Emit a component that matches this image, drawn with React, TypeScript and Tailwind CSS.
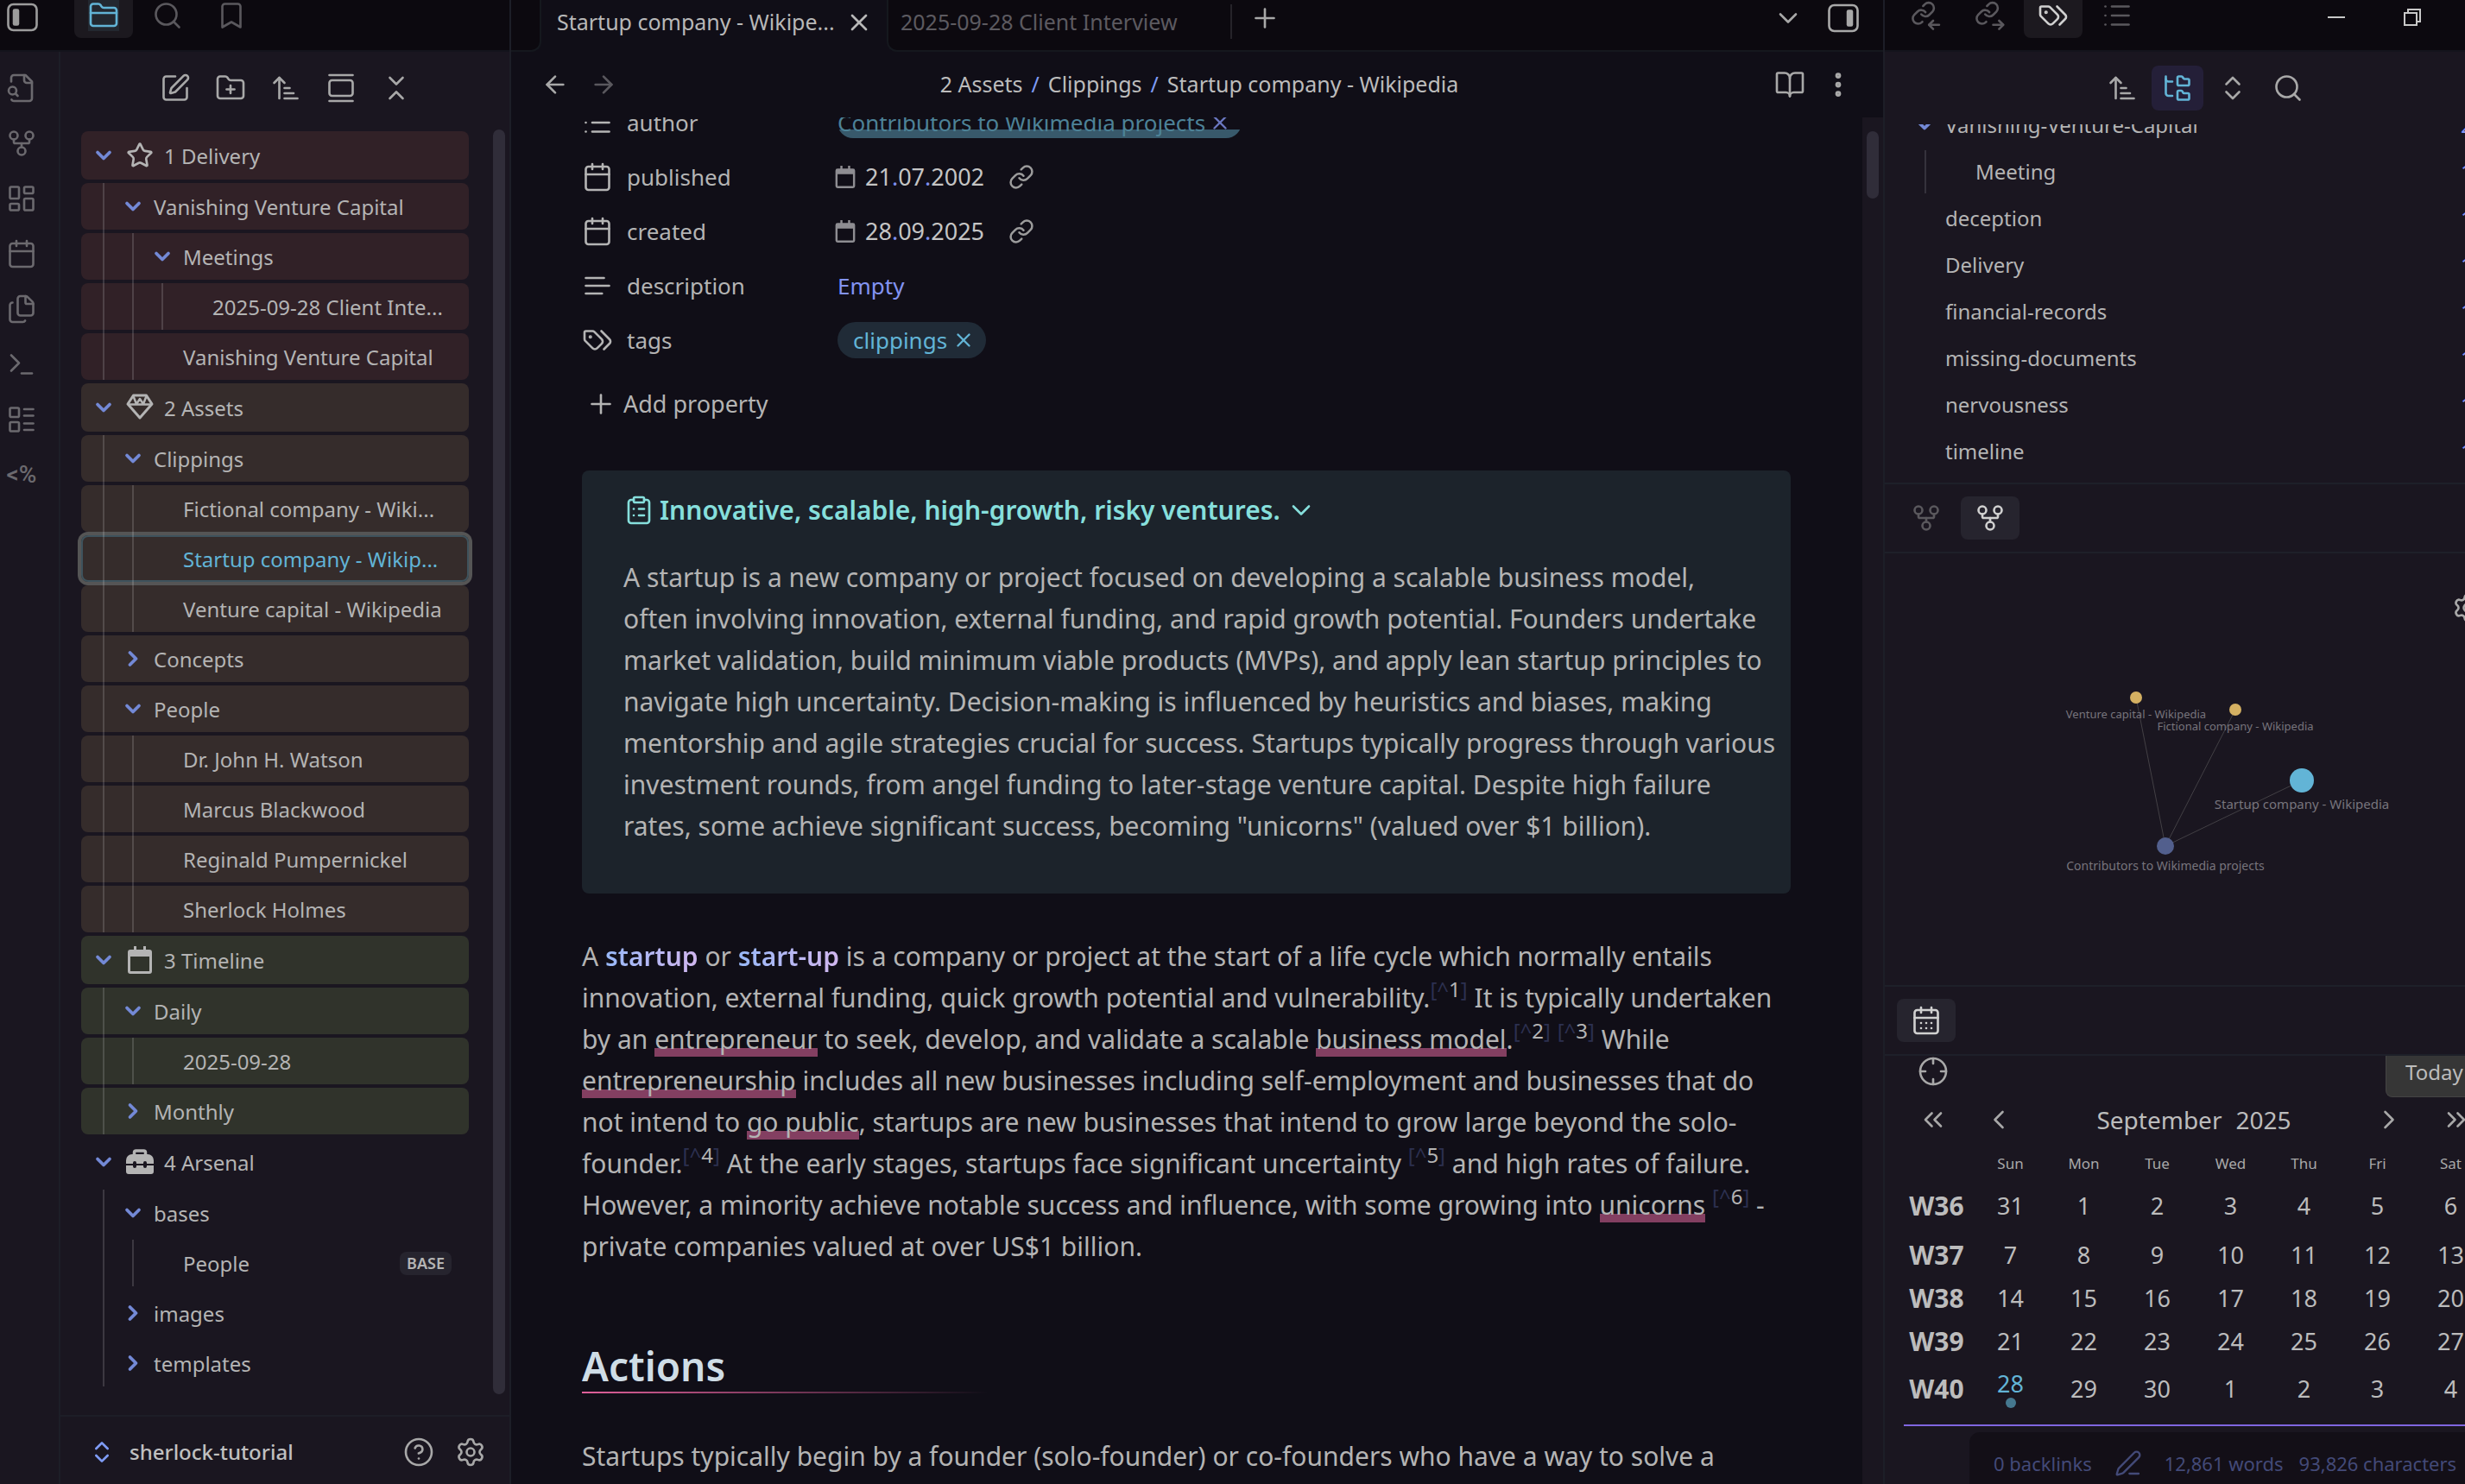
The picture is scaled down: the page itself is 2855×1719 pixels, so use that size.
import React from "react";
import type { ReactNode } from "react";
import {
  ArrowLeft,
  ArrowRight,
  ArrowUpNarrowWide,
  BookOpen,
  Bookmark,
  Calendar,
  CalendarDays,
  ChevronDown,
  ChevronLeft,
  ChevronRight,
  ChevronsDownUp,
  ChevronsLeft,
  ChevronsRight,
  ChevronsUpDown,
  CircleHelp,
  ClipboardList,
  Crosshair,
  EllipsisVertical,
  Files,
  FolderClosed,
  FolderPlus,
  FolderTree,
  GalleryVertical,
  GitFork,
  LayoutDashboard,
  LayoutList,
  Link as LinkIcon,
  List,
  PenLine,
  Plus,
  Search,
  Settings,
  SquarePen,
  Star,
  Terminal,
  X,
} from "lucide-react";

const stroke = { size: 36, strokeWidth: 1.75 };

/* ---------- drawn icons ---------- */

function Glyph({ size = 36, width = 1.75, children }: { size?: number; width?: number; children: ReactNode }) {
  return (
    <svg
      width={size}
      height={size}
      viewBox="0 0 24 24"
      fill="none"
      stroke="currentColor"
      strokeWidth={width}
      strokeLinecap="round"
      strokeLinejoin="round"
      aria-hidden="true"
    >
      {children}
    </svg>
  );
}

function SidebarToggle({ side }: { side: "left" | "right" }) {
  return (
    <Glyph>
      <rect x="1" y="2" width="22" height="20" rx="4" />
      <rect x={side === "left" ? 4.5 : 14.5} y="5.5" width="5" height="13" rx="1.5" fill="currentColor" stroke="none" />
    </Glyph>
  );
}

function FileSearchGlyph() {
  return (
    <Glyph>
      <path d="M14 2v4a2 2 0 0 0 2 2h4" />
      <path d="M4.268 21a2 2 0 0 0 1.727 1H18a2 2 0 0 0 2-2V7l-5-5H6a2 2 0 0 0-2 2v3" />
      <path d="m9 18-1.500-1.500" />
      <circle cx="5" cy="14" r="3" />
    </Glyph>
  );
}

function TagsGlyph() {
  return (
    <Glyph>
      <path d="m15 5 6.3 6.3a2.4 2.4 0 0 1 0 3.4L17 19" />
      <path d="M9.586 5.586A2 2 0 0 0 8.172 5H3a1 1 0 0 0-1 1v5.172a2 2 0 0 0 .586 1.414L8.29 18.29a2.426 2.426 0 0 0 3.42 0l3.58-3.58a2.426 2.426 0 0 0 0-3.42z" />
      <circle cx="6.5" cy="9.5" r=".5" fill="currentColor" />
    </Glyph>
  );
}

function LinkArrow({ out }: { out?: boolean }) {
  return (
    <Glyph>
      <g transform="translate(.6 .4) scale(.82)" strokeWidth="2.1">
        <path d="M10 13a5 5 0 0 0 7.54.54l3-3a5 5 0 0 0-7.07-7.07l-1.72 1.71" />
        <path d="M14 11a5 5 0 0 0-7.54-.54l-3 3a5 5 0 0 0 7.07 7.07l.5-.5" />
      </g>
      <path d="M15 19.2h7.6" />
      {out ? <path d="m19.6 16 3.2 3.2-3.2 3.2" /> : <path d="m18 16-3.2 3.2 3.2 3.2" />}
    </Glyph>
  );
}

function TextLines() {
  return (
    <Glyph>
      <path d="M17 6H3M21 12H3M15.5 18H3" />
    </Glyph>
  );
}

function CalendarSolidTop({ size }: { size: number }) {
  return (
    <svg width={size} height={size} viewBox="0 0 32 32" fill="currentColor" aria-hidden="true">
      <path
        fillRule="evenodd"
        d="M9 0h3v4h8V0h3v4h4a3 3 0 0 1 3 3v22a3 3 0 0 1-3 3H5a3 3 0 0 1-3-3V7a3 3 0 0 1 3-3h4zM5 12v17h22V12z"
      />
    </svg>
  );
}

function Diamond() {
  return (
    <svg width="32" height="32" viewBox="0 0 32 32" fill="none" stroke="currentColor" strokeWidth="3" strokeLinejoin="round" aria-hidden="true">
      <path d="M8.500 2h15L30 12 16 28 2 12Z" />
      <path d="M2 12.500h28M8.500 3l3.500 9 4-6 4 6 3.500-9" strokeWidth="2.500" />
    </svg>
  );
}

function Toolbox() {
  return (
    <svg width="32" height="32" viewBox="0 0 32 32" fill="currentColor" aria-hidden="true">
      <path d="M9.500 9V5a2 2 0 0 1 2-2h9a2 2 0 0 1 2 2v4" fill="none" stroke="currentColor" strokeWidth="3.500" />
      <path d="M0 18v-4a7 7 0 0 1 7-7h18a7 7 0 0 1 7 7v4h-8v-1a2 2 0 0 0-4 0v1h-8v-1a2 2 0 0 0-4 0v1z" />
      <path d="M0 20v7a3 3 0 0 0 3 3h26a3 3 0 0 0 3-3v-7h-8v1a2 2 0 0 1-4 0v-1h-8v1a2 2 0 0 1-4 0v-1z" />
    </svg>
  );
}

/* ---------- file tree ---------- */

type Node = {
  name: string;
  icon?: ReactNode;
  open?: boolean;
  badge?: string;
  active?: boolean;
  children?: Node[];
};

const tree: { tint: string; node: Node }[] = [
  {
    tint: "bg-[#312127]",
    node: {
      name: "1 Delivery",
      icon: <Star size={32} strokeWidth={2} />,
      open: true,
      children: [
        {
          name: "Vanishing Venture Capital",
          open: true,
          children: [
            { name: "Meetings", open: true, children: [{ name: "2025-09-28 Client Inte..." }] },
            { name: "Vanishing Venture Capital" },
          ],
        },
      ],
    },
  },
  {
    tint: "bg-[#352c2b]",
    node: {
      name: "2 Assets",
      icon: <Diamond />,
      open: true,
      children: [
        {
          name: "Clippings",
          open: true,
          children: [
            { name: "Fictional company - Wiki..." },
            { name: "Startup company - Wikip...", active: true },
            { name: "Venture capital - Wikipedia" },
          ],
        },
        { name: "Concepts", open: false },
        {
          name: "People",
          open: true,
          children: [
            { name: "Dr. John H. Watson" },
            { name: "Marcus Blackwood" },
            { name: "Reginald Pumpernickel" },
            { name: "Sherlock Holmes" },
          ],
        },
      ],
    },
  },
  {
    tint: "bg-[#30332b]",
    node: {
      name: "3 Timeline",
      icon: <CalendarSolidTop size={32} />,
      open: true,
      children: [
        { name: "Daily", open: true, children: [{ name: "2025-09-28" }] },
        { name: "Monthly", open: false },
      ],
    },
  },
  {
    tint: "",
    node: {
      name: "4 Arsenal",
      icon: <Toolbox />,
      open: true,
      children: [
        { name: "bases", open: true, children: [{ name: "People", badge: "BASE" }] },
        { name: "images", open: false },
        { name: "templates", open: false },
      ],
    },
  },
];

const rowIndent = ["pl-3", "pl-[46px]", "pl-[80px]", "pl-[114px]"];
const guideIndent = ["left-[25px]", "left-[59px]", "left-[93px]"];

function TreeItem({ node, tint, depth }: { node: Node; tint: string; depth: number }) {
  return (
    <li className="flex flex-col gap-1">
      <button
        type="button"
        className={`flex w-full items-center gap-[10px] rounded-lg pr-5 text-left whitespace-nowrap ${rowIndent[depth]} ${tint} ${
          depth === 0 ? "h-[56px]" : "h-[54px]"
        } ${node.active ? "text-[#62b4d6] ring-4 ring-[#555555] inset-ring-2 inset-ring-[#3e525c]" : ""}`}
      >
        <span className="flex w-7 shrink-0 justify-center text-[#7389d6]">
          {node.open === true && <ChevronDown size={28} strokeWidth={3.2} />}
          {node.open === false && <ChevronRight size={28} strokeWidth={3.2} />}
        </span>
        {node.icon && <span className="flex w-9 shrink-0 justify-center">{node.icon}</span>}
        <span className="pt-px">{node.name}</span>
        {node.badge && (
          <span className="ml-auto rounded-lg bg-[#26242e] px-2 text-[18px] leading-[27px] font-semibold">{node.badge}</span>
        )}
      </button>
      {node.children && (
        <ul className="relative flex flex-col gap-1">
          {node.children.map((child, i) => (
            <TreeItem key={i} node={child} tint={tint} depth={depth + 1} />
          ))}
          <span className={`absolute inset-y-0 w-[2px] bg-white/15 ${guideIndent[depth]}`} />
        </ul>
      )}
    </li>
  );
}

function IconButton({ label, children }: { label: string; children: ReactNode }) {
  return (
    <button type="button" aria-label={label} className="flex h-9 w-9 shrink-0 items-center justify-center">
      {children}
    </button>
  );
}

function PanelTab({ label, active, children }: { label: string; active?: boolean; children: ReactNode }) {
  return (
    <button
      type="button"
      aria-label={label}
      className={`flex h-11 w-[68px] shrink-0 items-center justify-center rounded-b-lg pb-2 ${
        active ? "bg-[#1c191f] text-[#d0d0d0]" : "text-[#5a585d]"
      }`}
    >
      {children}
    </button>
  );
}

function LeftSide() {
  return (
    <aside className="flex w-[592px] shrink-0 flex-col border-r-2 border-[#1d1e27] bg-[#1a1620]">
      <div className="flex h-[60px] shrink-0 items-start border-b-2 border-[#14141c] bg-[#0c090f]">
        <button type="button" aria-label="Toggle left sidebar" className="ml-2 flex h-10 w-9 items-center text-[#9c9c9c]">
          <SidebarToggle side="left" />
        </button>
        <div className="ml-[42px] flex gap-[6px]">
          <PanelTab label="Files" active>
            <span className="bg-[#232830] text-[#62b4d6]">
              <FolderClosed {...stroke} />
            </span>
          </PanelTab>
          <PanelTab label="Search">
            <Search {...stroke} />
          </PanelTab>
          <PanelTab label="Bookmarks">
            <Bookmark {...stroke} />
          </PanelTab>
        </div>
      </div>
      <div className="flex min-h-0 flex-1">
        <nav aria-label="Ribbon" className="flex w-[70px] shrink-0 flex-col gap-7 border-r-2 border-[#1d1e27] pt-6 pl-[7px] text-[#6b696e]">
          <IconButton label="Quick switcher"><FileSearchGlyph /></IconButton>
          <IconButton label="Graph view"><GitFork {...stroke} /></IconButton>
          <IconButton label="Canvas"><LayoutDashboard {...stroke} /></IconButton>
          <IconButton label="Daily note"><Calendar {...stroke} /></IconButton>
          <IconButton label="Templates"><Files {...stroke} /></IconButton>
          <IconButton label="Command palette"><Terminal {...stroke} /></IconButton>
          <IconButton label="Bases"><LayoutList {...stroke} /></IconButton>
          <IconButton label="Templater">
            <span className="font-['Roboto',sans-serif] text-[28px] font-medium">&lt;%</span>
          </IconButton>
        </nav>
        <div className="flex min-w-0 flex-1 flex-col">
          <div className="flex h-[84px] shrink-0 items-center justify-center gap-7 pl-[2px] text-[#a8a8a8]">
            <IconButton label="New note"><SquarePen {...stroke} /></IconButton>
            <IconButton label="New folder"><FolderPlus {...stroke} /></IconButton>
            <IconButton label="Sort order"><ArrowUpNarrowWide {...stroke} /></IconButton>
            <IconButton label="Auto reveal"><GalleryVertical {...stroke} /></IconButton>
            <IconButton label="Collapse all"><ChevronsDownUp {...stroke} /></IconButton>
          </div>
          <div className="flex min-h-0 flex-1 pr-[5px]">
            <ul className="mt-2 ml-6 flex min-w-0 flex-1 flex-col gap-1 text-[24px] text-[#b4b4b4]">
              {tree.map(({ tint, node }) => (
                <TreeItem key={node.name} node={node} tint={tint} depth={0} />
              ))}
            </ul>
            <div className="mt-[6px] mb-6 ml-7 w-[14px] rounded-full bg-[#302d39]" />
          </div>
          <div className="flex h-[80px] shrink-0 items-center border-t-2 border-[#1d1e27] pt-1 pr-[27px] pl-8">
            <button type="button" className="flex items-center gap-4 text-[24px] font-medium text-[#c0c0c0]">
              <span className="text-[#7f9cf5]"><ChevronsUpDown size={32} strokeWidth={2} /></span>
              sherlock-tutorial
            </button>
            <div className="ml-auto flex gap-6 text-[#a8a8a8]">
              <IconButton label="Help"><CircleHelp {...stroke} /></IconButton>
              <IconButton label="Settings"><Settings {...stroke} /></IconButton>
            </div>
          </div>
        </div>
      </div>
    </aside>
  );
}

/* ---------- note ---------- */

function Property({ icon, name, children }: { icon: ReactNode; name: string; children: ReactNode }) {
  return (
    <div className="flex h-[63px] items-center">
      <dt className="flex w-[296px] shrink-0 items-center gap-4">
        {icon}
        {name}
      </dt>
      <dd className="flex items-center">{children}</dd>
    </div>
  );
}

function DateValue({ parts }: { parts: string[] }) {
  return (
    <>
      <span className="-ml-1 text-[#8e8d92]"><CalendarSolidTop size={26} /></span>
      <span className="ml-[10px] text-[27px] text-[#c4c4c4]">
        {parts.map((p, i) => (
          <React.Fragment key={i}>
            {i > 0 && <span className="text-[#7f8ff0]">.</span>}
            {p}
          </React.Fragment>
        ))}
      </span>
      <a href="#daily" aria-label="Open daily note" className="ml-7 text-[#9c9c9c]">
        <LinkIcon size={30} strokeWidth={2} />
      </a>
    </>
  );
}

function Ref({ n }: { n: number }) {
  return (
    <sup className="text-[24px] text-[#2c3050]">
      [^<span className="text-[#b4b4b4]">{n}</span>]
    </sup>
  );
}

function Wiki({ children }: { children: ReactNode }) {
  return (
    <a href="#wiki" className="bg-[linear-gradient(to_top,#833f61_10px,transparent_10px)]">
      {children}
    </a>
  );
}

function Term({ children }: { children: ReactNode }) {
  return (
    <strong className="bg-linear-to-r from-[#97b8f8] to-[#d0b6ee] bg-clip-text font-semibold text-transparent">{children}</strong>
  );
}

function Note() {
  return (
    <main className="flex min-w-0 flex-1 flex-col bg-[#100e17]">
      <div className="flex h-[60px] shrink-0 text-[25px] whitespace-nowrap">
        <div className="w-[35px] shrink-0 rounded-br-xl border-r-2 border-b-2 border-[#15181e] bg-[#0c090f]" />
        <div className="flex w-[400px] shrink-0 items-center justify-between pr-4 pb-2 pl-[18px] text-[#b8b8b8]">
          <span>Startup company - Wikipe...</span>
          <button type="button" aria-label="Close tab"><X size={32} strokeWidth={2} /></button>
        </div>
        <div className="flex min-w-0 flex-1 items-center rounded-bl-xl border-b-2 border-l-2 border-[#15181e] bg-[#0c090f] pr-7 pb-4 text-[#a8a8a8]">
          <button type="button" className="w-[396px] pt-[10px] pl-[14px] text-left text-[#5c5a60]">2025-09-28 Client Interview</button>
          <span className="mt-2 h-10 w-[2px] bg-[#26242a]" />
          <span className="ml-5 flex"><IconButton label="New tab"><Plus {...stroke} /></IconButton></span>
          <div className="ml-auto flex gap-7">
            <IconButton label="Tab list"><ChevronDown {...stroke} /></IconButton>
            <IconButton label="Toggle right sidebar"><SidebarToggle side="right" /></IconButton>
          </div>
        </div>
      </div>
      <div className="grid h-[76px] shrink-0 grid-cols-[1fr_auto_1fr] items-center pr-[34px] pl-[35px] text-[#a8a8a8]">
        <div className="flex gap-6">
          <button type="button" aria-label="Back"><ArrowLeft size={32} strokeWidth={2} /></button>
          <button type="button" aria-label="Forward" className="text-[#5a585e]"><ArrowRight size={32} strokeWidth={2} /></button>
        </div>
        <div className="flex gap-[10px] pl-1 text-[25px] whitespace-nowrap text-[#bcbcbc]">
          <a href="#assets">2 Assets</a>
          <span className="text-[#7f9cf5]">/</span>
          <a href="#clippings">Clippings</a>
          <span className="text-[#7f9cf5]">/</span>
          <span>Startup company - Wikipedia</span>
        </div>
        <div className="flex justify-end gap-5">
          <IconButton label="Reading view"><BookOpen {...stroke} /></IconButton>
          <IconButton label="More options"><EllipsisVertical {...stroke} strokeWidth={2.5} /></IconButton>
        </div>
      </div>
      <div className="flex min-h-0 flex-1">
        <article className="min-w-0 flex-1 overflow-hidden pr-[83px] pl-[82px] text-[30px] leading-[48px] whitespace-nowrap text-[#b4b4b4]">
          <dl className="-mt-[26px] text-[26px]">
            <Property icon={<List {...stroke} />} name="author">
              <span className="flex h-9 items-center gap-1 rounded-full bg-[linear-gradient(to_top,#38596b_10px,transparent_10px)] pr-3 text-[#4d8297]">
                <a href="#contributors">Contributors to Wikimedia projects</a>
                <button type="button" aria-label="Remove author" className="text-[#6b78c0]"><X size={26} strokeWidth={2.2} /></button>
              </span>
            </Property>
            <Property icon={<Calendar {...stroke} />} name="published">
              <DateValue parts={["21", "07", "2002"]} />
            </Property>
            <Property icon={<Calendar {...stroke} />} name="created">
              <DateValue parts={["28", "09", "2025"]} />
            </Property>
            <Property icon={<TextLines />} name="description">
              <span className="text-[#8293f2]">Empty</span>
            </Property>
            <Property icon={<TagsGlyph />} name="tags">
              <span className="flex h-[42px] items-center gap-[6px] rounded-full bg-[#202b37] pr-[13px] pl-[18px] text-[#62b4d6]">
                <a href="#tag">clippings</a>
                <button type="button" aria-label="Remove tag"><X size={26} strokeWidth={2.2} /></button>
              </span>
            </Property>
          </dl>
          <button type="button" className="mt-[11px] flex h-[63px] items-center gap-2 pl-1 text-[27px]">
            <Plus {...stroke} />
            Add property
          </button>
          <section className="mt-[46px] rounded-lg bg-[#1c232b] px-12 pt-[22px] pb-[54px]">
            <button type="button" className="flex items-center gap-[6px] text-[30px] font-semibold text-[#86dfdc]">
              <ClipboardList {...stroke} />
              Innovative, scalable, high-growth, risky ventures.
              <ChevronDown {...stroke} />
            </button>
            <p className="mt-[30px]">
              A startup is a new company or project focused on developing a scalable business model,
              <br />
              often involving innovation, external funding, and rapid growth potential. Founders undertake
              <br />
              market validation, build minimum viable products (MVPs), and apply lean startup principles to
              <br />
              navigate high uncertainty. Decision-making is influenced by heuristics and biases, making
              <br />
              mentorship and agile strategies crucial for success. Startups typically progress through various
              <br />
              investment rounds, from angel funding to later-stage venture capital. Despite high failure
              <br />
              rates, some achieve significant success, becoming "unicorns" (valued over $1 billion).
            </p>
          </section>
          <p className="mt-[49px]">
            A <Term>startup</Term> or <Term>start-up</Term> is a company or project at the start of a life cycle which normally entails
            <br />
            innovation, external funding, quick growth potential and vulnerability.
            <Ref n={1} /> It is typically undertaken
            <br />
            by an <Wiki>entrepreneur</Wiki> to seek, develop, and validate a scalable <Wiki>business model</Wiki>.
            <Ref n={2} /> <Ref n={3} /> While
            <br />
            <Wiki>entrepreneurship</Wiki> includes all new businesses including self-employment and businesses that do
            <br />
            not intend to <Wiki>go public</Wiki>, startups are new businesses that intend to grow large beyond the solo-
            <br />
            founder.
            <Ref n={4} /> At the early stages, startups face significant uncertainty <Ref n={5} /> and high rates of failure.
            <br />
            However, a minority achieve notable success and influence, with some growing into <Wiki>unicorns</Wiki> <Ref n={6} /> -
            <br />
            private companies valued at over US$1 billion.
          </p>
          <h1 className="mt-[84px] text-[46px] leading-[60px] font-semibold text-[#cfdde6]">Actions</h1>
          <div className="h-[2px] w-[470px] bg-linear-to-r from-[#e0609a] to-transparent" />
          <p className="mt-[49px]">
            Startups typically begin by a founder (solo-founder) or co-founders who have a way to solve a
          </p>
        </article>
        <div className="flex w-6 shrink-0 justify-center bg-[#1a1620] pt-4">
          <div className="h-[78px] w-[14px] rounded-full bg-[#302d39]" />
        </div>
      </div>
    </main>
  );
}

/* ---------- right side ---------- */

const tags: [string, number][] = [
  ["deception", 1],
  ["Delivery", 1],
  ["financial-records", 1],
  ["missing-documents", 1],
  ["nervousness", 1],
  ["timeline", 1],
];

function TagRow({ name, count, open, nested }: { name: string; count: number; open?: boolean; nested?: boolean }) {
  return (
    <li className={`relative flex h-[54px] items-center gap-[10px] whitespace-nowrap ${nested ? "pl-[67px]" : "pl-8"}`}>
      {nested && <span className="absolute inset-y-[2px] left-[46px] w-[2px] bg-[#35323c]" />}
      <span className="flex w-7 justify-center text-[#7389d6]">{open && <ChevronDown size={28} strokeWidth={3.2} />}</span>
      <a href="#tag">{name}</a>
      <span className="ml-auto w-[5px] text-[#8293f2]">{count}</span>
    </li>
  );
}

const graphNodes = [
  { name: "Venture capital - Wikipedia", x: 291, y: 167, r: 7, label: 191, size: 13, fill: "#d4b062" },
  { name: "Fictional company - Wikipedia", x: 406, y: 181, r: 7, label: 205, size: 13, fill: "#d4b062" },
  { name: "Startup company - Wikipedia", x: 483, y: 263, r: 14, label: 296, size: 15, fill: "#62b4d6" },
];
const hub = { name: "Contributors to Wikimedia projects", x: 325, y: 339, r: 10, label: 367, size: 14, fill: "#525f8d" };

const weekdays = ["Sun", "Mon", "Tue", "Wed", "Thu", "Fri", "Sat"];
const weeks = [
  { id: "W36", height: "h-16", days: [31, 1, 2, 3, 4, 5, 6] },
  { id: "W37", height: "h-[50px]", days: [7, 8, 9, 10, 11, 12, 13] },
  { id: "W38", height: "h-[50px]", days: [14, 15, 16, 17, 18, 19, 20] },
  { id: "W39", height: "h-[50px]", days: [21, 22, 23, 24, 25, 26, 27] },
  { id: "W40", height: "h-[60px]", days: [28, 29, 30, 1, 2, 3, 4] },
];

function RightSide() {
  return (
    <aside className="relative flex w-[674px] shrink-0 flex-col overflow-hidden border-l-2 border-[#1d1e27] bg-[#1a1620]">
      <div className="flex h-[60px] shrink-0 items-start gap-[6px] border-b-2 border-[#14141c] bg-[#0c090f] pl-[13px]">
        <PanelTab label="Backlinks"><LinkArrow /></PanelTab>
        <PanelTab label="Outgoing links"><LinkArrow out /></PanelTab>
        <PanelTab label="Tags" active><TagsGlyph /></PanelTab>
        <PanelTab label="Outline"><List {...stroke} /></PanelTab>
        <div className="ml-auto flex h-10 items-center gap-[68px] pr-[51px] text-[#c8c8c8]">
          <button type="button" aria-label="Minimise" className="h-[2px] w-5 bg-current" />
          <button type="button" aria-label="Restore">
            <svg width="20" height="20" viewBox="0 0 20 20" fill="none" stroke="currentColor" strokeWidth="2" aria-hidden="true">
              <rect x="1" y="5" width="14" height="14" />
              <path d="M5 5V1h14v14h-4" />
            </svg>
          </button>
        </div>
      </div>

      <div className="flex h-[84px] shrink-0 items-center gap-1 pl-[245px] text-[#a8a8a8]">
        <button type="button" aria-label="Sort order" className="flex h-[52px] w-[60px] items-center justify-center"><ArrowUpNarrowWide {...stroke} /></button>
        <button type="button" aria-label="Nested tags" className="flex h-[52px] w-[60px] items-center justify-center rounded-lg bg-[#241f38] text-[#62b4d6]"><FolderTree {...stroke} /></button>
        <button type="button" aria-label="Expand all" className="flex h-[52px] w-[60px] items-center justify-center"><ChevronsUpDown {...stroke} /></button>
        <button type="button" aria-label="Search tags" className="flex h-[52px] w-[60px] items-center justify-center"><Search {...stroke} /></button>
      </div>
      <div className="shrink-0 overflow-hidden pb-[9px]">
        <ul className="-mt-[26px] text-[24px] text-[#b4b4b4]">
          <TagRow name="Vanishing-Venture-Capital" count={2} open />
          <TagRow name="Meeting" count={1} nested />
          {tags.map(([name, count]) => (
            <TagRow key={name} name={name} count={count} />
          ))}
        </ul>
      </div>

      <div className="flex h-[82px] shrink-0 items-center gap-[6px] border-y-2 border-[#1e2029] pl-[14px]">
        <button type="button" aria-label="Graph" className="flex h-[50px] w-[68px] items-center justify-center text-[#5a585d]"><GitFork {...stroke} /></button>
        <button type="button" aria-label="Local graph" className="flex h-[50px] w-[68px] items-center justify-center rounded-lg bg-[#26242e] text-[#d0d0d0]"><GitFork {...stroke} /></button>
      </div>
      <div className="relative h-[500px] shrink-0">
        <svg width="672" height="500" viewBox="0 0 672 500" role="img" aria-label="Local graph of linked notes">
          {graphNodes.map((n) => (
            <line key={n.name} x1={hub.x} y1={hub.y} x2={n.x} y2={n.y} stroke="#434045" strokeWidth="1" />
          ))}
          {[...graphNodes, hub].map((n) => (
            <g key={n.name}>
              <circle cx={n.x} cy={n.y} r={n.r} fill={n.fill} />
              <text x={n.x} y={n.label} fontSize={n.size} fill="#77747c" textAnchor="middle">{n.name}</text>
            </g>
          ))}
        </svg>
        <button type="button" aria-label="Graph settings" className="absolute top-[45px] -right-[21px] text-[#a8a8a8]"><Settings {...stroke} /></button>
      </div>

      <div className="flex h-[82px] shrink-0 items-center border-y-2 border-[#1e2029] pl-[14px]">
        <button type="button" aria-label="Calendar" className="flex h-[50px] w-[68px] items-center justify-center rounded-lg bg-[#26242e] text-[#d0d0d0]"><CalendarDays {...stroke} /></button>
      </div>
      <div className="flex h-12 shrink-0 items-start pl-[38px]">
        <span className="text-[#a8a8a8]"><IconButton label="Reveal current"><Crosshair {...stroke} /></IconButton></span>
        <button type="button" className="ml-auto h-12 w-[92px] rounded-bl-lg border-b border-l border-[#444444] bg-[#363636] pb-[10px] pl-[22px] text-left text-[24px] text-[#bcbcbc]">Today</button>
      </div>
      <div className="-mr-2 flex h-[52px] shrink-0 items-center pl-[38px] text-[#a8a8a8]">
        <IconButton label="Previous year"><ChevronsLeft {...stroke} /></IconButton>
        <span className="ml-10 flex"><IconButton label="Previous month"><ChevronLeft {...stroke} /></IconButton></span>
        <div className="flex flex-1 justify-center gap-4 text-[28px] text-[#bcbcbc]">
          <span>September</span>
          <span>2025</span>
        </div>
        <span className="mr-[42px] flex"><IconButton label="Next month"><ChevronRight {...stroke} /></IconButton></span>
        <IconButton label="Next year"><ChevronsRight {...stroke} /></IconButton>
      </div>
      <table className="ml-[17px] w-[681px] shrink-0 table-fixed border-collapse text-center text-[27px] text-[#bcbcbc]">
        <thead>
          <tr className="h-[42px] text-[17px] text-[#a8a8a8]">
            <th scope="col" aria-label="Week" className="w-[86px] p-0" />
            {weekdays.map((d) => (
              <th key={d} scope="col" className="p-0 pt-2 font-normal">{d}</th>
            ))}
          </tr>
        </thead>
        <tbody>
          {weeks.map((w) => (
            <tr key={w.id} className={w.height}>
              <th scope="row" className="p-0 text-[30px] leading-8 font-bold">{w.id}</th>
              {w.days.map((d) => (
                <td key={d} className="p-0 leading-8">
                  {d === 28 ? (
                    <span className="flex flex-col items-center text-[#62b4d6]">
                      {d}
                      <span className="h-3 w-3 rounded-full bg-[#45788f]" />
                    </span>
                  ) : (
                    d
                  )}
                </td>
              ))}
            </tr>
          ))}
        </tbody>
      </table>
      <div className="mt-[11px] ml-[22px] h-[2px] shrink-0 bg-[#8066e0]" />

      <footer className="absolute right-0 bottom-0 flex h-[60px] w-[574px] items-center rounded-tl-xl bg-[#130f17] pt-3 pl-7 text-[22px] whitespace-nowrap text-[#434a78]">
        <span>0 backlinks</span>
        <span className="mx-[26px]"><PenLine size={32} strokeWidth={1.75} /></span>
        <span>12,861 words</span>
        <span className="ml-[18px]">93,826 characters</span>
      </footer>
    </aside>
  );
}

export default function App() {
  return (
    <div className="flex h-screen overflow-hidden bg-[#100e17] font-['Noto_Sans',sans-serif]">
      <LeftSide />
      <Note />
      <RightSide />
    </div>
  );
}
